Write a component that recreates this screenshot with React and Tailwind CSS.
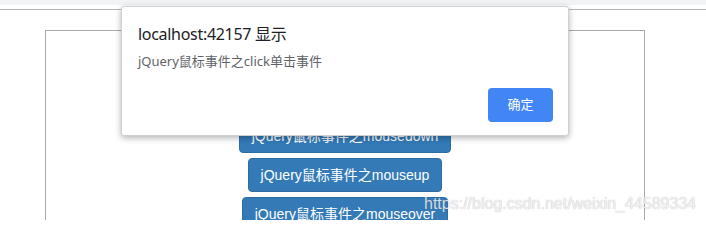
export default function App() {
  const buttons = [
    "jQuery鼠标事件之click",
    "jQuery鼠标事件之dblclick",
    "jQuery鼠标事件之mousedown",
    "jQuery鼠标事件之mouseup",
    "jQuery鼠标事件之mouseover",
    "jQuery鼠标事件之mouseout",
  ];

  return (
    <div className="relative h-[220px] w-[706px] overflow-hidden bg-white font-['Liberation_Sans','Noto_Sans_CJK_SC',sans-serif]">
      {/* browser chrome strip */}
      <div className="h-[5px] bg-[#f1f3f4]" />

      {/* page */}
      <div className="mt-[4px] border-t border-[#b4b4b4] pt-[20px]">
        <div className="ml-[45px] w-[600px] border border-[#a9a9a9] pt-[10px] pb-4">
          <div className="flex flex-col items-center gap-[5px]">
            {buttons.map((b) => (
              <button
                key={b}
                className="h-[34px] rounded-[4px] border border-[#2e6da4] bg-[#337ab7] px-3 text-[14px] leading-5 text-white"
              >
                {b}
              </button>
            ))}
          </div>
        </div>
      </div>

      {/* watermark */}
      <div className="pointer-events-none absolute left-[424px] top-[192px] text-[16px] text-white/80 [text-shadow:0_0_1px_rgba(0,0,0,0.35)]">
        https://blog.csdn.net/weixin_44589334
      </div>

      {/* alert dialog */}
      <div className="absolute left-[121px] top-[6px] flex h-[130px] w-[448px] flex-col rounded-[3px] border border-[#d0d0d0] bg-white pl-4 pr-[15px] pt-[16px] pb-[13px] shadow-[0_2px_6px_rgba(0,0,0,0.3)] font-['Noto_Sans','Noto_Sans_CJK_SC',sans-serif]">
        <div className="text-[16px] leading-[22px] tracking-[-0.3px] text-[#202124]">localhost:42157 显示</div>
        <div className="mt-[7px] text-[13px] leading-[18px] text-[#5f6368]">jQuery鼠标事件之click单击事件</div>
        <div className="mt-auto flex justify-end">
          <button className="h-[34px] w-[65px] rounded-[4px] bg-[#4285f4] text-[13px] text-white">确定</button>
        </div>
      </div>
    </div>
  );
}
